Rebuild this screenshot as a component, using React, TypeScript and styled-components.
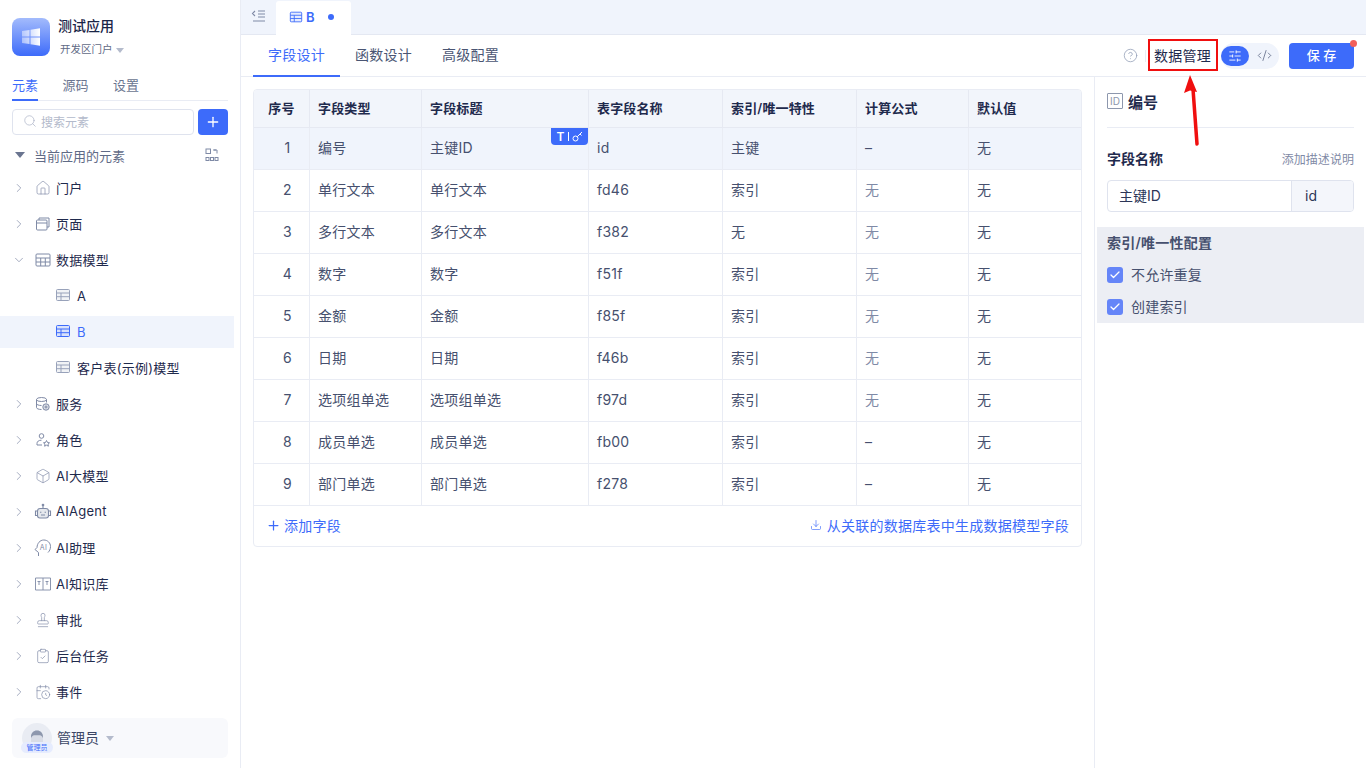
import React from 'react';
import styled, {createGlobalStyle} from 'styled-components';
import {
  Box,
  CalendarClock,
  Check,
  ChevronDown,
  ChevronRight,
  CircleHelp,
  ClipboardCheck,
  CodeXml,
  Download,
  House,
  Plus,
  Search,
  SlidersHorizontal,
  Stamp,
} from 'lucide-react';

const GlobalStyle = createGlobalStyle`
  html, body { margin: 0; padding: 0; background: #fff; }
  body {
    font-family: Inter, "Noto Sans CJK SC", sans-serif;
    color: #1f2a4d;
    overflow: hidden;
  }
  * { box-sizing: border-box; }
`;

const blue = '#3d6bfa';
const iconGray = '#7f8aa6';

const TableIcon = ({size = 16, color = iconGray}: {size?: number; color?: string}) => (
  <svg width={size} height={size} viewBox="0 0 16 16" fill="none" stroke={color} strokeWidth="1">
    <rect x="1.5" y="2.5" width="13" height="11" rx="1" fill={`${color}22`} />
    <path d="M1.5 6h13M1.5 9.700h13M6 6v7.500" />
  </svg>
);

const GridIcon = () => (
  <svg width="16" height="16" viewBox="0 0 16 16" fill="none" stroke={iconGray} strokeWidth="1">
    <rect x="1" y="2" width="14" height="12" rx="1" />
    <path d="M1 6h14M1 10h14M5.700 6v8M10.300 6v8" />
  </svg>
);

const PagesIcon = () => (
  <svg width="16" height="16" viewBox="0 0 16 16" fill="none" stroke={iconGray} strokeWidth="1">
    <rect x="1.500" y="4" width="10.500" height="10" rx="1" />
    <path d="M1.500 7h10.500M4 4V2h10v9h-2" />
  </svg>
);

const ServiceIcon = () => (
  <svg width="16" height="16" viewBox="0 0 16 16" fill="none" stroke={iconGray} strokeWidth="1">
    <ellipse cx="6.500" cy="3.500" rx="5" ry="2" />
    <path d="M1.500 3.500v8c0 1.100 2 2 5 2M1.500 7.500c0 1.100 2 2 5 2M11.500 3.500v3" />
    <circle cx="11" cy="11" r="3.200" fill={`${iconGray}44`} />
    <circle cx="11" cy="11" r="1" />
  </svg>
);

const RoleIcon = () => (
  <svg width="16" height="16" viewBox="0 0 16 16" fill="none" stroke={iconGray} strokeWidth="1">
    <circle cx="6.500" cy="4" r="2.300" />
    <path d="M2 13v-1.500c0-2 1.600-3.300 4.500-3.300M2 13h5" />
    <path d="M11.500 8.500l1 2 2 .3-1.500 1.400.4 2-1.900-1-1.900 1 .4-2-1.500-1.400 2-.3z" />
  </svg>
);

const AgentIcon = () => (
  <svg width="18" height="18" viewBox="0 0 18 18" fill="none" stroke={iconGray} strokeWidth="1.100">
    <circle cx="9" cy="2" r="0.800" fill={iconGray} />
    <path d="M9 3v2.500" />
    <rect x="3.500" y="5.500" width="11" height="9.500" rx="2.500" fill={`${iconGray}33`} />
    <path d="M3.500 8H1.500v4.500h2M14.500 8h2v4.500h-2M7 12h4" />
    <path d="M6.700 8.700v1M11.300 8.700v1" strokeWidth="1.400" />
  </svg>
);

const AssistantIcon = () => (
  <svg width="18" height="18" viewBox="0 0 18 18" fill="none" stroke={iconGray} strokeWidth="1">
    <path d="M4.500 17v-3.500L1 10.500l2-2C3.200 4.500 5.800 1 9.800 1c3.700 0 6.700 2.800 6.700 6.500 0 2.600-1 4.500-2.500 6" />
    <text x="5.800" y="10.800" fontSize="7" fill={iconGray} stroke="none" fontFamily="Inter, sans-serif">AI</text>
  </svg>
);

const BookIcon = () => (
  <svg width="18" height="18" viewBox="0 0 18 18" fill="none" stroke={iconGray} strokeWidth="0.900">
    <path d="M9 3H1.500v12H9M9 3h7.500v12H9M9 3v12" />
    <path d="M3.500 6.500h3M5 6.500v3.500M11.500 6.500h3M13 6.500v3.500" />
  </svg>
);

const GroupIcon = () => (
  <svg width="14" height="14" viewBox="0 0 14 14" fill="none" stroke={iconGray} strokeWidth="1">
    <rect x="1" y="1" width="4.500" height="4.500" />
    <path d="M8 2h4v3.500M10 1v2" />
    <rect x="1" y="9.500" width="3" height="3" />
    <rect x="5.500" y="9.500" width="3" height="3" />
    <rect x="10" y="9.500" width="3" height="3" />
  </svg>
);

const KeyIcon = () => (
  <svg width="11" height="11" viewBox="0 0 11 11" fill="none" stroke="#fff" strokeWidth="1">
    <circle cx="3.500" cy="7.500" r="2.500" />
    <path d="M5.300 5.700L10 1M8 3l1.500 1.500" />
  </svg>
);

const WindowsLogo = () => (
  <svg width="20" height="20" viewBox="0 0 20 20">
    <defs>
      <linearGradient id="win" x1="1" y1="0" x2="0" y2="0">
        <stop offset="0" stopColor="#fff" />
        <stop offset="1" stopColor="#fff" stopOpacity="0.45" />
      </linearGradient>
    </defs>
    <path fill="url(#win)" d="M1 4l7.500-1.100v6.500H1zM9.500 2.700L19 1.300v8.100H9.500zM1 10.500h7.500V17L1 16zM9.500 10.500H19v8.200l-9.500-1.400z" />
  </svg>
);

const AvatarFace = () => (
  <svg width="18" height="16" viewBox="0 0 18 16">
    <path d="M3 16V8c0-4 2.500-6.500 6-6.500S15 4 15 8v8z" fill="#d8dce6" />
    <path d="M3 9V8c0-4 2.500-6.500 6-6.500S15 4 15 8v1c-1-2-2-2.800-3-2.800H6C5 6.200 4 7 3 9z" fill="#8d97ad" />
  </svg>
);

type TreeEntry = {label: string; icon: React.ReactNode; open?: boolean};

const sm = {size: 16, color: iconGray, strokeWidth: 1};

const upperTree: TreeEntry[] = [
  {label: '门户', icon: <House {...sm} />},
  {label: '页面', icon: <PagesIcon />},
  {label: '数据模型', icon: <GridIcon />, open: true},
];

const children = ['A', 'B', '客户表(示例)模型'];

const lowerTree: TreeEntry[] = [
  {label: '服务', icon: <ServiceIcon />},
  {label: '角色', icon: <RoleIcon />},
  {label: 'AI大模型', icon: <Box {...sm} />},
  {label: 'AIAgent', icon: <AgentIcon />},
  {label: 'AI助理', icon: <AssistantIcon />},
  {label: 'AI知识库', icon: <BookIcon />},
  {label: '审批', icon: <Stamp {...sm} />},
  {label: '后台任务', icon: <ClipboardCheck {...sm} />},
  {label: '事件', icon: <CalendarClock {...sm} />},
];

const columns = ['序号', '字段类型', '字段标题', '表字段名称', '索引/唯一特性', '计算公式', '默认值'];

const rows = [
  ['1', '编号', '主键ID', 'id', '主键', '–', '无'],
  ['2', '单行文本', '单行文本', 'fd46', '索引', '无', '无'],
  ['3', '多行文本', '多行文本', 'f382', '无', '无', '无'],
  ['4', '数字', '数字', 'f51f', '索引', '无', '无'],
  ['5', '金额', '金额', 'f85f', '索引', '无', '无'],
  ['6', '日期', '日期', 'f46b', '索引', '无', '无'],
  ['7', '选项组单选', '选项组单选', 'f97d', '索引', '无', '无'],
  ['8', '成员单选', '成员单选', 'fb00', '索引', '–', '无'],
  ['9', '部门单选', '部门单选', 'f278', '索引', '–', '无'],
];

export default function App() {
  return (
    <Page>
      <GlobalStyle />
      <Sidebar>
        <Brand>
          <Logo>
            <WindowsLogo />
          </Logo>
          <div>
            <BrandName>测试应用</BrandName>
            <BrandSub>
              开发区门户
              <Caret />
            </BrandSub>
          </div>
        </Brand>
        <SideTabs>
          <SideTab $active>元素</SideTab>
          <SideTab>源码</SideTab>
          <SideTab>设置</SideTab>
        </SideTabs>
        <SearchRow>
          <SearchBox>
            <Search size={14} color="#aab2c6" strokeWidth={1.2} />
            搜索元素
          </SearchBox>
          <AddButton>
            <Plus size={16} color="#fff" strokeWidth={2} />
          </AddButton>
        </SearchRow>
        <SectionHead>
          <SectionLabel>
            <SectionCaret />
            当前应用的元素
          </SectionLabel>
          <GroupIcon />
        </SectionHead>
        <Tree>
          {upperTree.map(item => (
            <TreeRow key={item.label}>
              <Chevron>
                {item.open ? (
                  <ChevronDown size={14} color={iconGray} strokeWidth={1.2} />
                ) : (
                  <ChevronRight size={14} color={iconGray} strokeWidth={1.2} />
                )}
              </Chevron>
              <TreeIcon>{item.icon}</TreeIcon>
              {item.label}
            </TreeRow>
          ))}
          {children.map(name => (
            <ChildRow key={name} $active={name === 'B'}>
              <ChildIcon>
                <TableIcon color={name === 'B' ? blue : '#98a2ba'} />
              </ChildIcon>
              {name}
            </ChildRow>
          ))}
          {lowerTree.map(item => (
            <TreeRow key={item.label}>
              <Chevron>
                <ChevronRight size={14} color={iconGray} strokeWidth={1.2} />
              </Chevron>
              <TreeIcon>{item.icon}</TreeIcon>
              {item.label}
            </TreeRow>
          ))}
        </Tree>
        <UserBar>
          <Avatar>
            <AvatarFace />
            <AvatarTag>管理员</AvatarTag>
          </Avatar>
          <UserName>管理员</UserName>
          <Caret />
        </UserBar>
      </Sidebar>

      <Main>
        <TabStrip>
          <Collapse>
            <svg width="16" height="16" viewBox="0 0 16 16" fill="none" stroke={iconGray} strokeWidth="1.100">
              <path d="M4 3L1.500 5.500 4 8M7 3h7M7 6h7M7 9h7M2 13h12" />
            </svg>
          </Collapse>
          <DocTab>
            <TableIcon size={14} color={blue} />
            <DocName>B</DocName>
            <Dot />
          </DocTab>
        </TabStrip>

        <TopBar>
          <TopTabs>
            <TopTab $active>字段设计</TopTab>
            <TopTab>函数设计</TopTab>
            <TopTab>高级配置</TopTab>
          </TopTabs>
          <TopActions>
            <CircleHelp size={15} color="#98a2ba" strokeWidth={1.3} />
            <ActionDivider />
            <ManageLabel>数据管理</ManageLabel>
            <ViewSwitch>
              <ViewOption $active>
                <SlidersHorizontal size={14} color="#fff" strokeWidth={1.5} />
              </ViewOption>
              <ViewOption>
                <CodeXml size={15} color="#5f6a86" strokeWidth={1.3} />
              </ViewOption>
            </ViewSwitch>
            <SaveButton>保 存</SaveButton>
          </TopActions>
          <Highlight />
          <Arrow width="20" height="76" viewBox="0 0 20 76">
            <path d="M10 14L14 69" stroke="#f00f0f" strokeWidth="3.500" strokeLinecap="round" />
            <path d="M7 0L1 18l6-2.500 7 1.500z" fill="#f00f0f" />
          </Arrow>
        </TopBar>

        <Body>
          <Content>
            <TableCard>
              <HeadRow>
                {columns.map((c, i) => (
                  <HeadCell key={c} $center={i === 0}>
                    {c}
                  </HeadCell>
                ))}
              </HeadRow>
              {rows.map((row, r) => (
                <DataRow key={row[0]} $selected={r === 0}>
                  {row.map((v, i) => (
                    <DataCell key={i} $center={i === 0} $muted={i === 5 && v === '无'}>
                      {v}
                      {r === 0 && i === 2 && (
                        <CellBadge>
                          <span>T</span>
                          <BadgeBar />
                          <KeyIcon />
                        </CellBadge>
                      )}
                    </DataCell>
                  ))}
                </DataRow>
              ))}
              <TableFooter>
                <AddField>
                  <Plus size={15} color={blue} strokeWidth={2} />
                  添加字段
                </AddField>
                <GenerateLink>
                  <Download size={12} color={blue} strokeWidth={1.3} />
                  从关联的数据库表中生成数据模型字段
                </GenerateLink>
              </TableFooter>
            </TableCard>
          </Content>

          <Inspector>
            <InspectorHead>
              <IdMark>ID</IdMark>
              编号
            </InspectorHead>
            <NameRow>
              <NameLabel>字段名称</NameLabel>
              <DescLink>添加描述说明</DescLink>
            </NameRow>
            <NameInput>
              <NameValue>主键ID</NameValue>
              <NameCode>id</NameCode>
            </NameInput>
            <ConfigBlock>
              <ConfigTitle>索引/唯一性配置</ConfigTitle>
              <CheckRow>
                <CheckBox>
                  <Check size={12} color="#fff" strokeWidth={2.5} />
                </CheckBox>
                <CheckText>不允许重复</CheckText>
              </CheckRow>
              <CheckRow>
                <CheckBox>
                  <Check size={12} color="#fff" strokeWidth={2.5} />
                </CheckBox>
                <CheckText>创建索引</CheckText>
              </CheckRow>
            </ConfigBlock>
          </Inspector>
        </Body>
      </Main>
    </Page>
  );
}

const Page = styled.div`
  display: flex;
  width: 1366px;
  height: 768px;
  overflow: hidden;
`;

const Sidebar = styled.aside`
  width: 241px;
  flex: none;
  height: 768px;
  border-right: 1px solid #e9ecf4;
  display: flex;
  flex-direction: column;
`;

const Brand = styled.div`
  display: flex;
  gap: 8px;
  padding: 18px 12px 0;
  height: 72px;
`;

const Logo = styled.div`
  width: 38px;
  height: 38px;
  border-radius: 8px;
  background: linear-gradient(180deg, #a3bbfc 0%, #3d6bfa 100%);
  display: flex;
  align-items: center;
  justify-content: center;
`;

const BrandName = styled.div`
  margin-top: -1px;
  font-size: 14px;
  line-height: 18px;
  font-weight: 500;
  color: #1a2547;
`;

const BrandSub = styled.div`
  display: flex;
  align-items: center;
  gap: 3px;
  margin-top: 7px;
  margin-left: 2px;
  font-size: 10.500px;
  line-height: 16px;
  color: #5f6a86;
`;

const Caret = styled.span`
  width: 0;
  height: 0;
  margin-top: 1px;
  border-left: 4.500px solid transparent;
  border-right: 4.500px solid transparent;
  border-top: 5px solid #b4bbcc;
`;

const SideTabs = styled.div`
  display: flex;
  gap: 24.500px;
  margin: 0 12px;
  height: 29px;
  border-bottom: 1px solid #e9ecf4;
`;

const SideTab = styled.div<{$active?: boolean}>`
  width: 26px;
  height: 29px;
  font-size: 13px;
  line-height: 26px;
  white-space: nowrap;
  color: ${p => (p.$active ? blue : '#6a7590')};
  border-bottom: ${p => (p.$active ? `2px solid ${blue}` : 'none')};
`;

const SearchRow = styled.div`
  display: flex;
  gap: 4px;
  padding: 8px 12px 0;
  height: 42px;
`;

const SearchBox = styled.div`
  width: 182px;
  height: 26px;
  border: 1px solid #dfe3ee;
  border-radius: 4px;
  display: flex;
  align-items: center;
  gap: 4px;
  padding: 0 0 2px 10px;
  font-size: 12px;
  color: #b3bacb;
`;

const AddButton = styled.div`
  width: 30px;
  height: 26px;
  border-radius: 4px;
  background: ${blue};
  display: flex;
  align-items: center;
  justify-content: center;
`;

const SectionHead = styled.div`
  display: flex;
  align-items: center;
  justify-content: space-between;
  height: 26px;
  padding: 0 21px 2px 15px;
  color: #5f6a86;
  font-size: 13px;
`;

const SectionLabel = styled.div`
  display: flex;
  align-items: center;
  gap: 9px;
`;

const SectionCaret = styled.span`
  width: 0;
  height: 0;
  border-left: 5px solid transparent;
  border-right: 5px solid transparent;
  border-top: 6px solid #6a7590;
`;

const Tree = styled.div`
  flex: 1;
  display: flex;
  flex-direction: column;
  padding-top: 1px;
`;

const TreeRow = styled.div`
  display: flex;
  align-items: center;
  flex: none;
  height: 36px;
  padding: 0 0 2px 12px;
  font-size: 13px;
  letter-spacing: 0.250px;
  color: #1f2a4d;
`;

const Chevron = styled.span`
  width: 14px;
  display: flex;
  justify-content: center;
  margin: 2px 8px 0 0;
`;

const TreeIcon = styled.span`
  width: 18px;
  display: flex;
  justify-content: center;
  margin: 1px 4px 0 0;
`;

const ChildRow = styled.div<{$active?: boolean}>`
  display: flex;
  align-items: center;
  flex: none;
  gap: 6px;
  width: 234px;
  height: 32px;
  margin: 2px 0;
  padding: 0 0 1px 55px;
  font-size: 13px;
  letter-spacing: 0.250px;
  background: ${p => (p.$active ? '#f0f4fc' : 'transparent')};
  color: ${p => (p.$active ? blue : '#1f2a4d')};
`;

const ChildIcon = styled.span`
  display: flex;
  margin-top: -1px;
`;

const UserBar = styled.div`
  display: flex;
  align-items: center;
  height: 40px;
  margin: 0 12px 10px;
  padding-left: 10px;
  border-radius: 6px;
  background: #f8f9fc;
  gap: 5px;
`;

const Avatar = styled.div`
  position: relative;
  width: 30px;
  height: 30px;
  border-radius: 50%;
  background: #e9ecf3;
  display: flex;
  align-items: flex-start;
  justify-content: center;
  padding-top: 6px;
  overflow: visible;
`;

const AvatarTag = styled.span`
  position: absolute;
  left: -1px;
  bottom: 0;
  width: 32px;
  height: 11px;
  border-radius: 6px;
  background: #e6ecfe;
  color: ${blue};
  font-size: 7px;
  line-height: 11px;
  text-align: center;
  white-space: nowrap;
`;

const UserName = styled.span`
  font-size: 14px;
  color: #3c4766;
  margin-right: 2px;
  padding-bottom: 2px;
`;

const Main = styled.main`
  flex: 1;
  display: flex;
  flex-direction: column;
  min-width: 0;
`;

const TabStrip = styled.div`
  display: flex;
  height: 35px;
  background: #f0f4fc;
  border-bottom: 1px solid #e4e8f2;
`;

const Collapse = styled.div`
  width: 35px;
  height: 34px;
  display: flex;
  align-items: flex-start;
  justify-content: center;
  padding-top: 8px;
`;

const DocTab = styled.div`
  display: flex;
  align-items: center;
  width: 75px;
  height: 35px;
  margin-top: 1px;
  padding-left: 13px;
  padding-bottom: 3px;
  background: #fff;
  border-radius: 3px 3px 0 0;
`;

const DocName = styled.span`
  margin-left: 3px;
  font-size: 13px;
  font-weight: 600;
  color: ${blue};
`;

const Dot = styled.span`
  width: 6px;
  height: 6px;
  margin-left: 13px;
  border-radius: 50%;
  background: ${blue};
`;

const TopBar = styled.div`
  position: relative;
  display: flex;
  align-items: center;
  justify-content: space-between;
  height: 42px;
  padding: 0 12px 0 12px;
  border-bottom: 1px solid #e9ecf4;
`;

const TopTabs = styled.div`
  display: flex;
  height: 42px;
`;

const TopTab = styled.div<{$active?: boolean}>`
  width: 87px;
  height: 42px;
  text-align: center;
  font-size: 14px;
  letter-spacing: 0.250px;
  line-height: 39px;
  color: ${p => (p.$active ? blue : '#4a5573')};
  border-bottom: ${p => (p.$active ? `2px solid ${blue}` : 'none')};
`;

const TopActions = styled.div`
  display: flex;
  align-items: center;
`;

const ActionDivider = styled.i`
  width: 1px;
  height: 12px;
  margin-left: 7px;
  background: #e9ecf4;
`;

const ManageLabel = styled.span`
  margin-left: 8px;
  padding-bottom: 2px;
  width: 58px;
  white-space: nowrap;
  font-size: 14px;
  letter-spacing: 0.250px;
  color: #1f2a4d;
`;

const ViewSwitch = styled.div`
  display: flex;
  margin-left: 9px;
  border-radius: 13px;
  background: #f0f4fc;
`;

const ViewOption = styled.div<{$active?: boolean}>`
  width: ${p => (p.$active ? '28px' : '30px')};
  height: ${p => (p.$active ? '20px' : '26px')};
  margin-top: ${p => (p.$active ? '3px' : '0')};
  display: flex;
  align-items: center;
  justify-content: center;
  background: ${p => (p.$active ? blue : 'transparent')};
  border-radius: 13px;
`;

const SaveButton = styled.div`
  position: relative;
  width: 65px;
  height: 26px;
  margin-left: 10px;
  border-radius: 4px;
  background: ${blue};
  color: #fff;
  font-size: 13px;
  font-weight: 500;
  line-height: 25px;
  text-align: center;
  white-space: pre;

  &::after {
    content: '';
    position: absolute;
    top: -3px;
    right: -3px;
    width: 7px;
    height: 7px;
    border-radius: 50%;
    background: #f2605a;
  }
`;

const Highlight = styled.div`
  position: absolute;
  left: 907px;
  top: 4px;
  width: 70px;
  height: 32px;
  border: 2px solid #f00f0f;
`;

const Arrow = styled.svg`
  position: absolute;
  left: 942px;
  top: 40px;
  z-index: 2;
`;

const Body = styled.div`
  flex: 1;
  display: flex;
  min-height: 0;
`;

const Content = styled.div`
  width: 854px;
  padding: 12px 12px 0 12px;
  border-right: 1px solid #e9ecf4;
`;

const TableCard = styled.div`
  width: 829px;
  border: 1px solid #e9ecf4;
  border-radius: 4px;
  overflow: hidden;
`;

const gridCols = '56px 112px 167px 134px 134px 112px 113px';

const HeadRow = styled.div`
  display: grid;
  grid-template-columns: ${gridCols};
  height: 38px;
  background: #f2f5fb;
`;

const DataRow = styled.div<{$selected?: boolean}>`
  display: grid;
  grid-template-columns: ${gridCols};
  height: 42px;
  background: ${p => (p.$selected ? '#f0f4fc' : '#fff')};
`;

const HeadCell = styled.div<{$center?: boolean}>`
  display: flex;
  align-items: center;
  justify-content: ${p => (p.$center ? 'center' : 'flex-start')};
  padding: 0 0 2px ${p => (p.$center ? '0' : '8px')};
  font-size: 13px;
  letter-spacing: 0.150px;
  font-weight: 600;
  color: #1f2a4d;
  border-right: 1px solid #e6e9f2;
  border-bottom: 1px solid #e6e9f2;
`;

const DataCell = styled.div<{$center?: boolean; $muted?: boolean}>`
  position: relative;
  display: flex;
  align-items: center;
  justify-content: ${p => (p.$center ? 'center' : 'flex-start')};
  padding: 0 0 3px ${p => (p.$center ? '12px' : '8px')};
  font-size: 14px;
  letter-spacing: 0.250px;
  color: ${p => (p.$muted ? '#7f8aa6' : '#46506e')};
  border-right: 1px solid #e9ecf4;
  border-bottom: 1px solid #e9ecf4;
`;

const CellBadge = styled.div`
  position: absolute;
  top: 0;
  right: 0;
  display: flex;
  align-items: center;
  justify-content: center;
  gap: 3px;
  width: 37px;
  height: 17px;
  border-radius: 0 0 4px 4px;
  background: ${blue};
  color: #fff;
  font-size: 12px;
  font-weight: 600;
`;

const BadgeBar = styled.i`
  width: 1px;
  height: 9px;
  background: #fff;
`;

const TableFooter = styled.div`
  display: flex;
  align-items: center;
  justify-content: space-between;
  height: 40px;
  padding: 0 12px 0 12px;
`;

const AddField = styled.div`
  display: flex;
  align-items: center;
  gap: 3px;
  padding-bottom: 2px;
  font-size: 14px;
  letter-spacing: 0.250px;
  color: ${blue};
`;

const GenerateLink = styled.div`
  display: flex;
  align-items: center;
  gap: 5px;
  padding-bottom: 2px;
  font-size: 14px;
  letter-spacing: 0.250px;
  color: ${blue};
`;

const Inspector = styled.aside`
  flex: 1;
  padding: 0 12px 0 12px;
  min-width: 0;
`;

const InspectorHead = styled.div`
  display: flex;
  align-items: center;
  gap: 5px;
  height: 51px;
  border-bottom: 1px solid #e9ecf4;
  padding-bottom: 2px;
  font-size: 15px;
  font-weight: 600;
  color: #1f2a4d;
`;

const IdMark = styled.span`
  width: 16px;
  height: 16px;
  border: 1px solid #8d97ad;
  border-radius: 1px;
  color: #8d97ad;
  font-size: 10px;
  font-weight: 400;
  line-height: 14px;
  text-align: center;
`;

const NameRow = styled.div`
  display: flex;
  align-items: center;
  justify-content: space-between;
  margin-top: 20px;
  height: 20px;
`;

const NameLabel = styled.span`
  font-size: 14px;
  font-weight: 600;
  color: #1f2a4d;
`;

const DescLink = styled.span`
  font-size: 12px;
  letter-spacing: 0.050px;
  color: #7f8aa6;
`;

const NameInput = styled.div`
  display: flex;
  height: 32px;
  margin-top: 12px;
  border: 1px solid #dfe3ee;
  border-radius: 4px;
  overflow: hidden;
  font-size: 14px;
`;

const NameValue = styled.div`
  width: 184px;
  padding-left: 11px;
  line-height: 29px;
  color: #2c3657;
  border-right: 1px solid #dfe3ee;
`;

const NameCode = styled.div`
  flex: 1;
  padding-left: 13px;
  line-height: 29px;
  color: #2c3657;
  background: #f4f6fb;
`;

const ConfigBlock = styled.div`
  margin: 15px -10px 0 -10px;
  padding: 0 0 0 10px;
  height: 96px;
  background: #eceef4;
`;

const ConfigTitle = styled.div`
  height: 32px;
  font-size: 14px;
  letter-spacing: 0.250px;
  font-weight: 600;
  line-height: 32px;
  color: #46506e;
`;

const CheckRow = styled.div`
  display: flex;
  align-items: center;
  gap: 8px;
  height: 32px;
  font-size: 14px;
  letter-spacing: 0.200px;
  color: #46506e;
`;

const CheckText = styled.span`
  padding-bottom: 2px;
`;

const CheckBox = styled.span`
  width: 16px;
  height: 16px;
  border-radius: 3px;
  background: #6585f8;
  display: flex;
  align-items: center;
  justify-content: center;
`;
